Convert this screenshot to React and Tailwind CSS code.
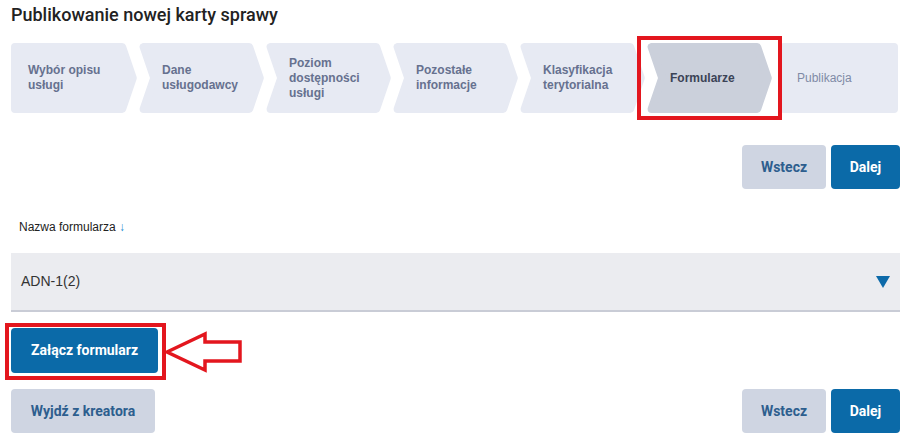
const steps = [
  { lines: ["Wybór opisu", "usługi"], kind: "first" },
  { lines: ["Dane", "usługodawcy"], kind: "mid" },
  { lines: ["Poziom", "dostępności", "usługi"], kind: "mid" },
  { lines: ["Pozostałe", "informacje"], kind: "mid" },
  { lines: ["Klasyfikacja", "terytorialna"], kind: "mid" },
  { lines: ["Formularze"], kind: "mid", active: true },
  { lines: ["Publikacja"], kind: "last", muted: true },
];

const shapes = {
  first: "4,4 111.2,4 121.8,35 111.2,66 4,66",
  mid: "5.6,4 111.2,4 121.8,35 111.2,66 5.6,66 16.2,35",
  last: "11,4 121,4 121,66 11,66",
};

function Step({ step }) {
  const fill = step.active ? "#cbd0db" : "#e7eaf3";
  const text = step.active
    ? "text-[#3b4356] font-bold"
    : step.muted
    ? "text-[#7f8aa6] font-normal"
    : "text-[#66718f] font-bold";
  return (
    <div className="relative flex-1 h-[70px] flex items-center">
      <svg className="absolute inset-0 w-full h-full" viewBox="0 0 127 70" preserveAspectRatio="none">
        <polygon points={shapes[step.kind]} fill={fill} stroke={fill} strokeWidth="8" strokeLinejoin="round" />
      </svg>
      <div className={`relative text-[12px] leading-[15px] ${step.kind === "first" ? "pl-[17px]" : "pl-[24px]"} ${text}`}>
        {step.lines.map((l) => (
          <div key={l}>{l}</div>
        ))}
      </div>
    </div>
  );
}

function NavButtons() {
  return (
    <div className="flex gap-[5px]">
      <button className="h-[44px] w-[84px] rounded-[4px] bg-[#cfd5e2] text-[#2d5e8e] text-[14px] font-bold">Wstecz</button>
      <button className="h-[44px] w-[69px] rounded-[4px] bg-[#0b6aa8] text-white text-[14px] font-bold">Dalej</button>
    </div>
  );
}

export default function App() {
  return (
    <div className="w-[905px] h-[438px] bg-white overflow-hidden pl-[11px] pr-[5px] font-['Liberation_Sans',Arial,sans-serif]">
      <h1 className="pt-[4px] text-[18px] leading-[22px] font-medium text-[#222] font-['Roboto',sans-serif]">
        Publikowanie nowej karty sprawy
      </h1>

      {/* kroki kreatora */}
      <div className="relative mt-[17px] flex">
        {steps.map((s) => (
          <Step key={s.lines.join(" ")} step={s} />
        ))}
        <div className="absolute left-[626px] -top-[7px] w-[145px] h-[84px] border-[4px] border-[#e3161e]" />
      </div>

      <div className="mt-[32px] flex justify-end font-['Roboto',sans-serif]">
        <NavButtons />
      </div>

      <div className="mt-[30px] pl-[8px] text-[12px] leading-[16px] text-[#222]">
        Nazwa formularza <span className="text-[#1a8bd1]">↓</span>
      </div>

      <div className="mt-[18px] h-[59px] bg-[#ebecf0] border-b-2 border-[#c9ccd6] flex items-center justify-between pl-[10px] pr-[10px]">
        <span className="text-[14px] text-[#333]">ADN-1(2)</span>
        <svg width="14" height="12" viewBox="0 0 14 12">
          <polygon points="0,0 14,0 7,12" fill="#0d6aa9" />
        </svg>
      </div>

      <div className="relative mt-[16px] font-['Roboto',sans-serif]">
        <button className="h-[45px] w-[147px] rounded-[4px] bg-[#0b6aa8] text-white text-[14px] font-bold">
          Załącz formularz
        </button>
        <div className="absolute -left-[6px] -top-[5px] w-[161px] h-[57px] border-[4px] border-[#e3161e]" />
        <svg className="absolute left-[153px] top-[2px]" width="80" height="44" viewBox="0 0 80 44">
          <polygon
            points="3,22 41,4 41,12 76,12 76,31 41,31 41,40"
            fill="none"
            stroke="#e3161e"
            strokeWidth="3.5"
            strokeLinejoin="miter"
          />
        </svg>
      </div>

      <div className="mt-[16px] flex justify-between font-['Roboto',sans-serif]">
        <button className="h-[44px] w-[144px] rounded-[4px] bg-[#cfd5e2] text-[#2d5e8e] text-[14px] font-bold">
          Wyjdź z kreatora
        </button>
        <NavButtons />
      </div>
    </div>
  );
}
